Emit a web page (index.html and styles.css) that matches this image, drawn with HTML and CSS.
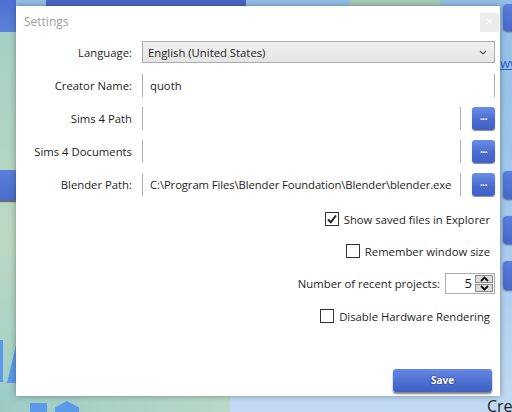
FILE: index.html
```html
<!DOCTYPE html>
<html>
<head>
<meta charset="utf-8">
<link rel="stylesheet" href="styles.css">
</head>
<body>
<div class="backdrop">
  <div class="bg-topbar"></div>
  <div class="bg-topgreen"></div>
  <div class="bg-leftbar"></div>
  <div class="bg-leftblue"></div>
  <div class="bg-leftgreen"></div>
  <div class="bg-shape s1"></div>
  <div class="bg-shape s2"></div>
  <div class="bg-shape s3"></div>
  <div class="bg-shape s4"></div>
  <div class="bg-bottom-green"></div>
  <div class="bg-rbtn r1"></div>
  <div class="bg-rbtn r2"></div>
  <div class="bg-rbtn r3"></div>
  <div class="bg-rbtn r4"></div>
  <div class="bg-link">www</div>
  <div class="bg-cre">Cre</div>
</div>

<div class="dialog">
  <div class="header">
    <div class="title">Settings</div>
    <div class="close">×</div>
  </div>

  <div class="form">
    <div class="label">Language:</div>
    <div class="combo">
      <span>English (United States)</span>
      <svg class="chev" width="8" height="5" viewBox="0 0 8 5"><polyline points="1,1 4,4 7,1" fill="none" stroke="#555" stroke-width="1.1"/></svg>
    </div>

    <div class="label">Creator Name:</div>
    <div class="textbox">quoth</div>

    <div class="label">Sims 4 Path</div>
    <div class="pathrow">
      <div class="textbox"></div>
      <div class="browse">...</div>
    </div>

    <div class="label">Sims 4 Documents</div>
    <div class="pathrow">
      <div class="textbox"></div>
      <div class="browse">...</div>
    </div>

    <div class="label">Blender Path:</div>
    <div class="pathrow">
      <div class="textbox path">C:\Program Files\Blender Foundation\Blender\blender.exe</div>
      <div class="browse">...</div>
    </div>
  </div>

  <div class="options">
    <div class="opt">
      <span class="check"><svg width="12" height="12" viewBox="0 0 12 12"><polyline points="2,6.5 4.8,9.3 10,2.5" fill="none" stroke="#222" stroke-width="2"/></svg></span>
      <span>Show saved files in Explorer</span>
    </div>
    <div class="opt">
      <span class="check"></span>
      <span>Remember window size</span>
    </div>
    <div class="opt spinrow">
      <span>Number of recent projects:</span>
      <div class="spinner">
        <div class="spinval">5</div>
        <div class="spinbtns">
          <div class="spinbtn"><svg width="9" height="6" viewBox="0 0 9 6"><polyline points="1,5 4.5,1.5 8,5" fill="none" stroke="#111" stroke-width="1.8"/></svg></div>
          <div class="spinbtn"><svg width="9" height="6" viewBox="0 0 9 6"><polyline points="1,1 4.5,4.5 8,1" fill="none" stroke="#111" stroke-width="1.8"/></svg></div>
        </div>
      </div>
    </div>
    <div class="opt">
      <span class="check"></span>
      <span>Disable Hardware Rendering</span>
    </div>
  </div>

  <div class="footer">
    <div class="save">Save</div>
  </div>
</div>
</body>
</html>
```

FILE: styles.css
```css
* { box-sizing: border-box; }
html, body {
  margin: 0;
  padding: 0;
  width: 512px;
  height: 412px;
  overflow: hidden;
}
body {
  position: relative;
  font-family: "Open Sans", "Noto Sans", sans-serif;
  font-size: 11.3px;
  color: #1e1e1e;
  background: linear-gradient(180deg, #92bfe6 0%, #a8cbed 60%, #c2daf3 100%);
}

/* ---------- blurred application behind the modal ---------- */
.backdrop { position: absolute; inset: 0; overflow: hidden; }
.bg-topbar {
  position: absolute; left: 46px; top: 0; width: 200px; height: 7px;
  background: #4b67c9;
}
.bg-topgreen {
  position: absolute; left: 350px; top: 0; width: 90px; height: 7px;
  background: #a8cdb9;
}
.bg-leftbar {
  position: absolute; left: 0; top: 0; width: 16px; height: 32px;
  background: linear-gradient(180deg, #4d6fd2, #5c84da);
}
.bg-leftgreen {
  position: absolute; left: 0; top: 32px; width: 16px; height: 380px;
  background: linear-gradient(180deg, #a6d0c4 0%, #bcd8c2 55%, #a8d2c6 85%, #98c8c8 100%);
}
.bg-leftblue {
  position: absolute; left: 0; top: 170px; width: 16px; height: 30px; z-index: 2;
  background: linear-gradient(180deg, #5a7fdc, #4a6ccc);
  box-shadow: 0 2px 1px rgba(40,50,60,0.6);
}
.bg-bottom-green {
  position: absolute; left: 0; top: 396px; width: 230px; height: 16px;
  background: linear-gradient(90deg, #9ccbc6 0%, #aad2c5 45%, #b9d8c8 100%);
}
.bg-shape { position: absolute; background: #5b99ea; z-index: 3; }
.s1 { left: 0; top: 340px; width: 3px; height: 42px; }
.s2 { left: 7px; top: 345px; width: 9px; height: 38px; clip-path: polygon(100% 0, 100% 100%, 0 100%); }
.s3 { left: 30px; top: 403px; width: 17px; height: 9px; }
.s4 { left: 55px; top: 401px; width: 24px; height: 11px; clip-path: polygon(50% 0, 100% 60%, 100% 100%, 0 100%, 0 60%); }
.bg-rbtn {
  position: absolute; left: 503px; width: 12px; border-radius: 4px;
  background: linear-gradient(180deg, #5a7fdc, #4867c8);
  box-shadow: 0 1px 2px rgba(30,40,60,0.6);
}
.r1 { top: 4px; height: 27px; }
.r2 { top: 171px; height: 28px; }
.r3 { top: 216px; height: 28px; }
.r4 { top: 261px; height: 29px; }
.bg-link {
  position: absolute; left: 500px; top: 54px;
  color: #2d5fd0; text-decoration: underline; font-size: 13px;
}
.bg-cre {
  position: absolute; left: 487px; top: 395px;
  color: #222; font-size: 16px;
}

/* ---------- dialog ---------- */
.dialog {
  position: absolute; left: 16px; top: 6px;
  width: 484px; height: 390px;
  background: #fff;
  box-shadow: 0 0 6px rgba(0,0,0,0.35);
  display: flex; flex-direction: column;
  z-index: 5;
}
.header {
  height: 35px;
  display: flex; justify-content: space-between; align-items: flex-start;
}
.title {
  padding: 7px 0 0 8px;
  font-size: 12px;
  color: #a0a0a0;
}
.close {
  width: 19px; height: 19px;
  margin: 7px 1px 0 0;
  background: #ececec;
  color: #fff;
  font-size: 12px; line-height: 18px; text-align: center;
}

.form {
  display: grid;
  grid-template-columns: 116px 353px;
  grid-auto-rows: 23px;
  column-gap: 10px;
  row-gap: 10px;
}
.label {
  display: flex; align-items: center; justify-content: flex-end;
  color: #1e1e1e;
}
.combo {
  height: 22px;
  display: flex; align-items: center; justify-content: space-between;
  padding: 0 7px 0 5px;
  border: 1px solid #acacac;
  background: linear-gradient(180deg, #f0f0f0, #e5e5e5);
}
.chev { margin-top: 1px; }
.textbox {
  height: 23px;
  display: flex; align-items: center;
  padding-left: 7px;
  border-left: 1px solid #abadb3;
  border-right: 1px solid #abadb3;
  white-space: nowrap; overflow: hidden;
}
.textbox.path { letter-spacing: -0.1px; }
.pathrow {
  display: flex; gap: 11px;
}
.pathrow .textbox { flex: 1; }
.browse {
  width: 23px; height: 23px;
  border-radius: 3px;
  background: linear-gradient(180deg, #6a8ee6 0%, #4a6ccf 55%, #3f60c4 100%);
  box-shadow: 0 1px 1px rgba(0,0,0,0.45);
  color: #fff;
  font-size: 10px; font-weight: bold;
  line-height: 19px; text-align: center;
  letter-spacing: -0.5px;
}

.options {
  margin-top: 13px;
  display: flex; flex-direction: column; align-items: flex-end;
  gap: 12px;
  padding-right: 10px;
}
.opt {
  height: 20px;
  display: flex; align-items: center; gap: 5px;
}
.check {
  width: 14px; height: 14px;
  border: 1px solid #333;
  background: #fff;
  display: flex; align-items: center; justify-content: center;
}
.spinrow {
  height: 21px;
  margin-right: -5px;
  gap: 5px;
}
.spinner {
  width: 50px; height: 21px;
  border: 1px solid #acacac;
  display: flex;
}
.spinval {
  flex: 1;
  text-align: right;
  padding-right: 3px;
  font-size: 13px;
  line-height: 19px;
}
.spinbtns {
  width: 19px;
  display: flex; flex-direction: column; gap: 1px;
  padding: 1px 1px 1px 0;
}
.spinbtn {
  flex: 1;
  background: #dcdcdc;
  border: 1px solid #8a8a8a;
  display: flex; align-items: center; justify-content: center;
}

.footer {
  margin-top: auto;
  display: flex; justify-content: flex-end;
  padding: 0 8px 4px 0;
}
.save {
  width: 99px; height: 23px;
  border-radius: 3px;
  background: linear-gradient(180deg, #6689e4 0%, #4f71d3 50%, #3f5fc3 100%);
  box-shadow: 0 2px 2px rgba(0,0,0,0.5);
  color: #fff;
  font-size: 10px; font-weight: bold;
  line-height: 23px; text-align: center;
  text-shadow: 0 0 2px rgba(0,0,30,0.8);
}
```
